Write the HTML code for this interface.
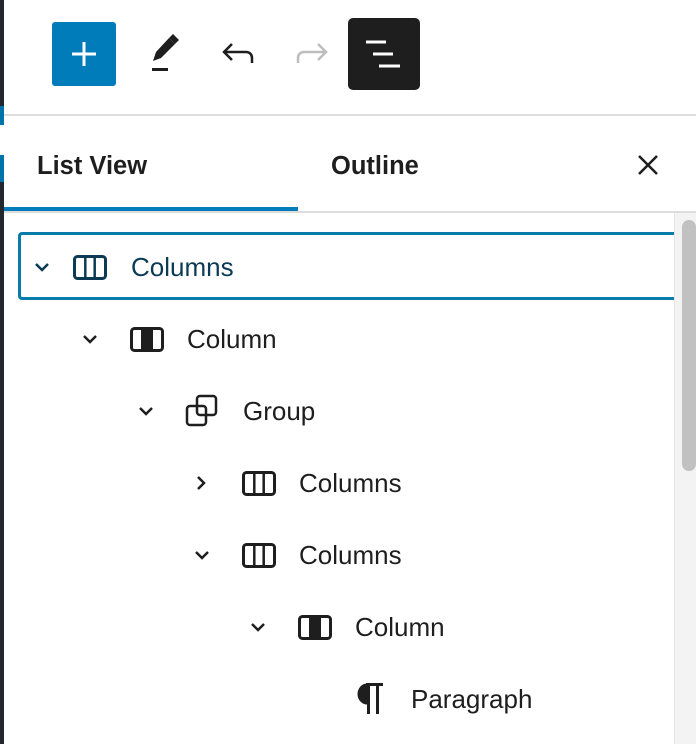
<!DOCTYPE html>
<html><head><meta charset="utf-8"><style>
body{margin:0;width:696px;height:744px;overflow:hidden;background:#fff;font-family:"Liberation Sans",sans-serif;color:#1e1e1e;position:relative}
.a{position:absolute}
.t{position:absolute;font-size:26px;line-height:28px;white-space:nowrap}
</style></head><body>
<div class="a" style="left:0;top:0;width:4px;height:744px;background:#23282d"></div>
<div class="a" style="left:0;top:106px;width:4px;height:76px;background:#0073aa"></div>
<div class="a" style="left:0;top:125px;width:8px;height:30px;background:#fff;border-radius:0 4px 4px 0"></div>
<!-- toolbar -->
<div class="a" style="left:52px;top:22px;width:64px;height:64px;background:#007cba;border-radius:3px"></div>
<svg class="a" style="left:52px;top:22px" width="64" height="64"><path d="M32 20v24M20 32h24" stroke="#fff" stroke-width="3"/></svg>
<svg class="a" style="left:148px;top:30px" width="40" height="44"><path d="M5 31l3-9 13-14 6 6-14 14z" fill="#1e1e1e"/><path d="M21 8l4-4 6 6-4 4z" fill="#1e1e1e"/><rect x="4" y="38" width="16" height="3" fill="#1e1e1e"/></svg>
<svg class="a" style="left:220px;top:38px" width="40" height="30"><path d="M12 6l-8 8 8 8M4 14h22c4 0 6 3 6 6v5" fill="none" stroke="#1e1e1e" stroke-width="2.5"/></svg>
<svg class="a" style="left:294px;top:38px" width="40" height="30"><path d="M24 6l8 8-8 8M32 14h-22c-4 0-6 3-6 6v5" fill="none" stroke="#bdbdbd" stroke-width="2.5"/></svg>
<div class="a" style="left:348px;top:18px;width:72px;height:72px;background:#1e1e1e;border-radius:5px"></div>
<svg class="a" style="left:348px;top:18px" width="72" height="72"><path d="M18 24h20M25 36h20M31 48h21" stroke="#fff" stroke-width="3"/></svg>
<div class="a" style="left:4px;top:114px;width:692px;height:2px;background:#ddd"></div>
<!-- tabs -->
<div class="t" style="left:37px;top:152px;font-weight:bold;font-size:25.5px">List View</div>
<div class="t" style="left:331px;top:152px;font-weight:bold;font-size:25.5px">Outline</div>
<svg class="a" style="left:636px;top:153px" width="24" height="24"><path d="M3 3l18 18M21 3L3 21" stroke="#1e1e1e" stroke-width="2.5"/></svg>
<div class="a" style="left:4px;top:211px;width:692px;height:2px;background:#ddd"></div>
<div class="a" style="left:4px;top:207px;width:294px;height:4px;background:#007cba"></div>
<!-- scrollbar -->
<div class="a" style="left:674px;top:213px;width:22px;height:531px;background:#f3f3f3;border-left:1px solid #e6e6e6"></div>
<div class="a" style="left:682px;top:220px;width:14px;height:251px;background:#c1c1c1;border-radius:7px"></div>
<!-- selected -->
<div class="a" style="left:18px;top:232px;width:656px;height:68px;border:3px solid #0a7cab;border-right:none;border-radius:4px 0 0 4px;box-sizing:border-box"></div>
<svg width="0" height="0" style="position:absolute"><defs>
<g id="cols"><rect x="1.5" y="1.5" width="31" height="22" rx="3" fill="none" stroke="currentColor" stroke-width="3"/><path d="M12.3 2v21M21.7 2v21" stroke="currentColor" stroke-width="2.5"/></g>
<g id="col"><rect x="1.5" y="1.5" width="31" height="22" rx="3" fill="none" stroke="currentColor" stroke-width="3"/><rect x="11" y="2" width="12" height="21" fill="currentColor"/></g>
<path id="dn" d="M2 2l6 6 6-6" fill="none" stroke="currentColor" stroke-width="2.5"/>
</defs></svg>
<!-- rows -->
<svg class="a" style="left:34px;top:262px;color:#0b3a55" width="16" height="12"><use href="#dn"/></svg>
<svg class="a" style="left:73px;top:255px;color:#0b3a55" width="35" height="25"><use href="#cols"/></svg>
<div class="t" style="left:131px;top:253px;color:#0b3a55">Columns</div>

<svg class="a" style="left:82px;top:334px" width="16" height="12"><use href="#dn"/></svg>
<svg class="a" style="left:130px;top:327px" width="35" height="25"><use href="#col"/></svg>
<div class="t" style="left:187px;top:325px">Column</div>

<svg class="a" style="left:138px;top:406px" width="16" height="12"><use href="#dn"/></svg>
<svg class="a" style="left:185px;top:394px" width="34" height="34"><rect x="2" y="12" width="19" height="19" rx="3" fill="none" stroke="#1e1e1e" stroke-width="2.5"/><rect x="12" y="2" width="19" height="19" rx="3" fill="none" stroke="#1e1e1e" stroke-width="2.5"/></svg>
<div class="t" style="left:243px;top:397px">Group</div>

<svg class="a" style="left:196px;top:475px" width="12" height="16"><path d="M2 2l6 6-6 6" fill="none" stroke="#1e1e1e" stroke-width="2.5"/></svg>
<svg class="a" style="left:242px;top:471px" width="35" height="25"><use href="#cols"/></svg>
<div class="t" style="left:299px;top:469px">Columns</div>

<svg class="a" style="left:194px;top:550px" width="16" height="12"><use href="#dn"/></svg>
<svg class="a" style="left:242px;top:543px" width="35" height="25"><use href="#cols"/></svg>
<div class="t" style="left:299px;top:541px">Columns</div>

<svg class="a" style="left:250px;top:622px" width="16" height="12"><use href="#dn"/></svg>
<svg class="a" style="left:298px;top:615px" width="35" height="25"><use href="#col"/></svg>
<div class="t" style="left:355px;top:613px">Column</div>

<svg class="a" style="left:356px;top:682px" width="28" height="34"><path d="M11 1.5A9.5 10.5 0 0 0 11 22.5Z" fill="#1e1e1e"/><rect x="10" y="1" width="17" height="3" fill="#1e1e1e"/><path d="M12.5 2v30M21.5 2v30" stroke="#1e1e1e" stroke-width="3"/></svg>
<div class="t" style="left:411px;top:685px">Paragraph</div>
</body></html>
